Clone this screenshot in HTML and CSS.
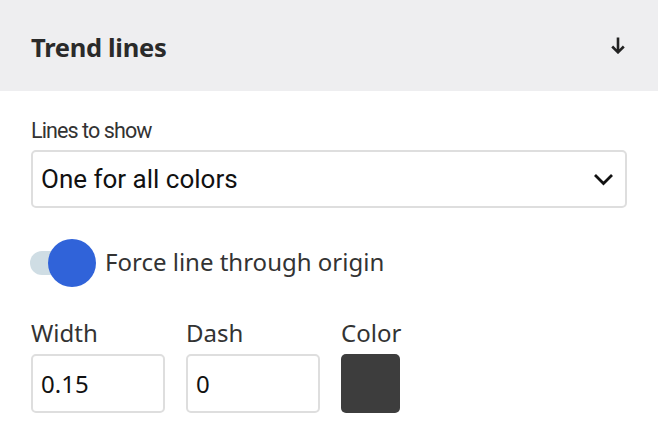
FILE: index.html
```html
<!DOCTYPE html>
<html>
<head>
<meta charset="utf-8">
<link rel="stylesheet" href="styles.css">
</head>
<body>
<div class="panel">
  <div class="header">
    <span class="title">Trend lines</span>
    <svg class="arrow" width="14" height="17" viewBox="0 0 14 17"><path d="M7 0.5 V15 M1.2 9.5 L7 15.3 L12.8 9.5" fill="none" stroke="#222" stroke-width="2.6"/></svg>
  </div>
  <div class="body">
    <div class="label">Lines to show</div>
    <div class="select">
      <span>One for all colors</span>
      <svg width="21" height="13" viewBox="0 0 21 13"><path d="M2 2 L10.5 10.5 L19 2" fill="none" stroke="#111" stroke-width="2.8"/></svg>
    </div>
    <div class="toggle-row">
      <div class="toggle"><div class="track"></div><div class="knob"></div></div>
      <span class="toggle-text">Force line through origin</span>
    </div>
    <div class="fields">
      <div class="field">
        <div class="flabel">Width</div>
        <div class="input">0.15</div>
      </div>
      <div class="field">
        <div class="flabel">Dash</div>
        <div class="input">0</div>
      </div>
      <div class="field">
        <div class="flabel">Color</div>
        <div class="swatch"></div>
      </div>
    </div>
  </div>
</div>
</body>
</html>
```
FILE: styles.css
```css
html, body { margin: 0; padding: 0; background: #fff; }
body { font-family: "Noto Sans", sans-serif; color: #333; }
.panel { width: 658px; }
.header {
  height: 91px;
  background: #eeeef0;
  display: flex;
  align-items: center;
  justify-content: space-between;
  padding: 2px 33px 0 31px;
  box-sizing: border-box;
}
.title { font-family: "Noto Sans", sans-serif; font-weight: 700; font-size: 25.5px; color: #2a2a2a; letter-spacing: -0.3px; }
.arrow { margin-top: -2px; }
.body { padding: 25px 31px 0 31px; }
.label { font-family: Roboto, sans-serif; font-size: 21.5px; color: #333; line-height: 30px; letter-spacing: -0.9px; }
.select {
  margin-top: 4px;
  height: 58px;
  box-sizing: border-box;
  border: 2px solid #dedede;
  border-radius: 5px;
  display: flex;
  align-items: center;
  justify-content: space-between;
  padding: 0 11px 0 8px;
  font-family: Roboto, sans-serif;
  font-size: 26px;
  color: #111;
  width: 596px;
}
.toggle-row { display: flex; align-items: center; margin-top: 31px; height: 48px; }
.toggle { position: relative; width: 65px; height: 48px; flex: none; }
.track { position: absolute; left: -1px; top: 12px; width: 40px; height: 24px; border-radius: 12px; background: #cfdde4; }
.knob { position: absolute; left: 17px; top: 0; width: 48px; height: 48px; border-radius: 50%; background: #3063d9; }
.toggle-text { margin-left: 9px; font-size: 24px; color: #333; margin-top: -3px; }
.fields { display: flex; gap: 21px; margin-top: 31px; }
.flabel { font-size: 24px; color: #333; line-height: 30px; margin-bottom: 6px; }
.input {
  width: 134px; height: 59px; box-sizing: border-box;
  border: 2px solid #dedede; border-radius: 5px;
  display: flex; align-items: center; padding-left: 8px;
  font-size: 24px; color: #111;
}
.swatch { width: 59px; height: 59px; border-radius: 5px; background: #3d3d3d; }
```
